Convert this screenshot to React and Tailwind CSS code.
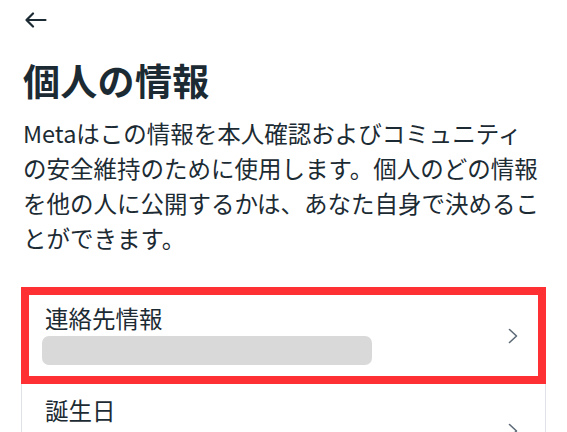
export default function App() {
  const font = { fontFamily: '"Noto Sans CJK JP", "Noto Sans", sans-serif' };
  return (
    <div
      className="w-[567px] h-[432px] overflow-hidden bg-white px-[23px] text-[#1c2b33]"
      style={font}
    >
      <div className="pt-[12px] h-[28px]">
        <svg width="23" height="16" viewBox="0 0 23 16" fill="none" className="ml-[1px]">
          <path d="M21.5 8H2.5M9 1.5L2.5 8L9 14.5" stroke="#1c2b33" strokeWidth="2.2" strokeLinecap="round" strokeLinejoin="round" />
        </svg>
      </div>
      <h1 className="mt-[34px] text-[37px] font-bold leading-[37px] tracking-[0.3px]">個人の情報</h1>
      <p className="mt-[17px] text-[23.5px] leading-[35px] whitespace-nowrap">
        Metaはこの情報を本人確認およびコミュニティ
        <br />
        の安全維持のために使用します。個人のどの情報
        <br />
        を他の人に公開するかは、あなた自身で決めるこ
        <br />
        とができます。
      </p>
      <div className="mt-[31px] mx-[-2px] border border-[#dfe3e7] rounded-t-[4px]">
        <div className="relative h-[95px] flex items-center justify-between pl-[20px] pr-[26px]">
          <div className="flex flex-col self-start pt-[15px]">
            <span className="text-[23.5px] leading-[30px] pl-[3px]">連絡先情報</span>
            <div className="mt-[3px] w-[330px] h-[29px] rounded-[7px] bg-[#d9d9d9]" />
          </div>
          <svg width="11" height="16" viewBox="0 0 11 16" fill="none">
            <path d="M1.5 1.5L8.5 8L1.5 14.5" stroke="#5d6b78" strokeWidth="1.6" strokeLinecap="round" strokeLinejoin="round" />
          </svg>
          <div className="absolute inset-[-1px] border-[8px] border-[#ff3033] pointer-events-none" />
        </div>
        <div className="h-[95px] flex items-center justify-between pl-[20px] pr-[26px]">
          <div className="flex flex-col self-start pt-[12px]">
            <span className="text-[23.5px] leading-[30px] pl-[3px]">誕生日</span>
          </div>
          <svg width="11" height="16" viewBox="0 0 11 16" fill="none">
            <path d="M1.5 1.5L8.5 8L1.5 14.5" stroke="#5d6b78" strokeWidth="1.6" strokeLinecap="round" strokeLinejoin="round" />
          </svg>
        </div>
      </div>
    </div>
  );
}
